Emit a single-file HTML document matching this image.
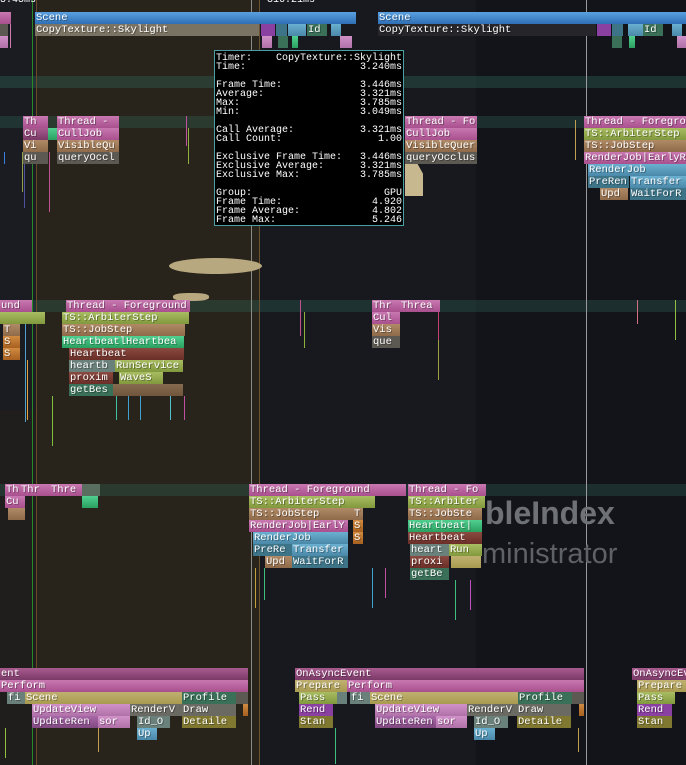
<!DOCTYPE html>
<html><head><meta charset="utf-8"><style>
html,body{margin:0;padding:0}
body{width:686px;height:765px;position:relative;overflow:hidden;background:#15171d;font-family:"Liberation Mono",monospace}
.r{position:absolute}
.t{position:absolute;width:1px}
.b{position:absolute;height:12px;font-size:10.5px;line-height:13px;color:#fff;white-space:nowrap;overflow:hidden;padding-left:1px;box-sizing:border-box;text-shadow:1px 1px 0 rgba(0,0,0,.35)}
.bl{background:linear-gradient(#5aa0e0,#2f6fb5)}
.pk{background:linear-gradient(#c878b0,#a8508e)}
.pd{background:linear-gradient(#a85a8e,#7a3a68)}
.ol{background:linear-gradient(#a8bc60,#82983e)}
.br{background:linear-gradient(#b08a66,#8e6a4a)}
.gy{background:#5c5852}
.gb{background:#7a7263}
.gn{background:linear-gradient(#50d090,#2aa060)}
.dr{background:linear-gradient(#8a4a40,#6a2e28)}
.gt{background:#6a807a}
.tg{background:#3a7058}
.or{background:linear-gradient(#d08a40,#a86020)}
.lb{background:linear-gradient(#6ab0d0,#4a88a8)}
.tl{background:#3d7488}
.tn{background:linear-gradient(#c0b070,#a89a50)}
.pp{background:linear-gradient(#d090c8,#b070a8)}
.pu{background:linear-gradient(#a868a8,#804880)}
.dg{background:#6a6a62}
.do{background:#807830}
.ppl{background:#8a40a0}
.tip{position:absolute;left:214px;top:50px;width:190px;height:176px;background:#000;border:1px solid #4aa0a0;color:#fff;font-size:10px;line-height:9px;padding:3px 1px 0 1px;box-sizing:border-box}
.tip div{display:flex;justify-content:space-between;height:9px;white-space:pre}
</style></head><body>
<div class="r" style="left:0;top:0;width:36px;height:765px;background:#1a1c22"></div>
<div class="r" style="left:36px;top:0;width:223px;height:765px;background:#29241b"></div>
<div class="r" style="left:0;top:410px;width:36px;height:355px;background:#201e1c"></div>
<div class="r" style="left:259px;top:0;width:217px;height:765px;background:#17191f"></div>
<div class="r" style="left:476px;top:0;width:210px;height:765px;background:#131419"></div>
<div class="r" style="left:0;top:76px;width:686px;height:12px;background:rgba(50,110,95,.35)"></div>
<div class="r" style="left:0;top:116px;width:686px;height:12px;background:rgba(50,110,95,.3)"></div>
<div class="r" style="left:0;top:300px;width:686px;height:12px;background:rgba(50,110,95,.3)"></div>
<div class="r" style="left:0;top:484px;width:686px;height:12px;background:rgba(50,110,95,.3)"></div>
<div class="r" style="left:32px;top:0;width:1px;height:765px;background:#2a8a2a"></div>
<div class="r" style="left:36px;top:0;width:1px;height:765px;background:#6a4a28"></div>
<div class="r" style="left:251px;top:0;width:1px;height:765px;background:#8a8a86"></div>
<div class="r" style="left:259px;top:0;width:1px;height:765px;background:#6a5232"></div>
<div class="r" style="left:586px;top:0;width:1px;height:765px;background:#9a9a9a"></div>
<div class="r" style="left:169px;top:258px;width:93px;height:16px;background:#b8a880;border-radius:50%"></div>
<div class="r" style="left:173px;top:293px;width:36px;height:8px;background:#b8a880;border-radius:40%"></div>
<div class="r" style="left:405px;top:164px;width:18px;height:32px;background:#c8b890;clip-path:polygon(0 0,70% 0,100% 30%,100% 100%,0 100%)"></div>
<div class="r" style="left:485px;top:495px;font-family:'Liberation Sans',sans-serif;font-weight:bold;font-size:32px;color:#6e7176">bleIndex</div>
<div class="r" style="left:482px;top:538px;font-family:'Liberation Sans',sans-serif;font-size:29px;color:#5e6166">ministrator</div>
<div class="r" style="left:0;top:-5px;font-size:10px;color:#fff">5.45ms</div>
<div class="r" style="left:261px;top:-5px;font-size:10px;color:#fff">-316.21ms</div>
<!-- ticks -->
<div class="t" style="left:10px;top:24px;height:24px;background:#d07ab0"></div>
<div class="t" style="left:186px;top:116px;height:30px;background:#c050a0"></div>
<div class="t" style="left:188px;top:128px;height:36px;background:#90b040"></div>
<div class="t" style="left:4px;top:152px;height:12px;background:#3a80e0"></div>
<div class="t" style="left:22px;top:152px;height:40px;background:#90a048"></div>
<div class="t" style="left:24px;top:164px;height:44px;background:#5050a0"></div>
<div class="t" style="left:49px;top:152px;height:60px;background:#c05090"></div>
<div class="t" style="left:300px;top:300px;height:36px;background:#c05090"></div>
<div class="t" style="left:304px;top:312px;height:36px;background:#90b040"></div>
<div class="t" style="left:438px;top:300px;height:48px;background:#c04070"></div>
<div class="t" style="left:438px;top:340px;height:40px;background:#a0a040"></div>
<div class="t" style="left:637px;top:300px;height:24px;background:#d07080"></div>
<div class="t" style="left:675px;top:300px;height:40px;background:#90c040"></div>
<div class="t" style="left:575px;top:120px;height:40px;background:#c0a050"></div>
<div class="t" style="left:25px;top:312px;height:110px;background:#50a0d0"></div>
<div class="t" style="left:27px;top:360px;height:60px;background:#e0a040"></div>
<div class="t" style="left:52px;top:396px;height:50px;background:#80c040"></div>
<div class="t" style="left:116px;top:396px;height:24px;background:#40c0a0"></div>
<div class="t" style="left:128px;top:396px;height:24px;background:#40a0d0"></div>
<div class="t" style="left:140px;top:396px;height:24px;background:#40a0d0"></div>
<div class="t" style="left:170px;top:396px;height:24px;background:#50c0d0"></div>
<div class="t" style="left:184px;top:396px;height:24px;background:#c050a0"></div>
<div class="t" style="left:255px;top:568px;height:40px;background:#c0a040"></div>
<div class="t" style="left:264px;top:568px;height:32px;background:#40c080"></div>
<div class="t" style="left:372px;top:568px;height:40px;background:#40a0d0"></div>
<div class="t" style="left:385px;top:568px;height:30px;background:#c050a0"></div>
<div class="t" style="left:455px;top:580px;height:40px;background:#40c080"></div>
<div class="t" style="left:470px;top:580px;height:30px;background:#c050c0"></div>
<div class="t" style="left:5px;top:728px;height:30px;background:#90c040"></div>
<div class="t" style="left:98px;top:728px;height:24px;background:#c0a050"></div>
<div class="t" style="left:335px;top:728px;height:36px;background:#40c080"></div>
<div class="t" style="left:578px;top:728px;height:24px;background:#c0a050"></div>
<!-- top rows -->
<div class="b bl" style="left:35px;top:12px;width:321px">Scene</div>
<div class="b bl" style="left:378px;top:12px;width:308px">Scene</div>
<div class="b pk" style="left:0;top:12px;width:11px"></div>
<div class="b gb" style="left:35px;top:24px;width:224px">CopyTexture::Skylight</div>
<div class="b ppl" style="left:261px;top:24px;width:14px"></div>
<div class="b tl" style="left:276px;top:24px;width:11px"></div>
<div class="b lb" style="left:288px;top:24px;width:18px"></div>
<div class="b tg" style="left:307px;top:24px;width:20px">Id</div>
<div class="b lb" style="left:331px;top:24px;width:10px"></div>
<div class="b" style="left:378px;top:24px;width:218px;background:#25252a">CopyTexture::Skylight</div>
<div class="b ppl" style="left:597px;top:24px;width:14px"></div>
<div class="b tl" style="left:612px;top:24px;width:11px"></div>
<div class="b lb" style="left:628px;top:24px;width:15px"></div>
<div class="b tg" style="left:643px;top:24px;width:20px">Id</div>
<div class="b lb" style="left:672px;top:24px;width:10px"></div>
<div class="b gy" style="left:0;top:24px;width:8px"></div>
<div class="b pp" style="left:0;top:36px;width:8px"></div>
<div class="b pp" style="left:262px;top:36px;width:10px"></div>
<div class="b tg" style="left:278px;top:36px;width:10px"></div>
<div class="b gn" style="left:292px;top:36px;width:6px"></div>
<div class="b pp" style="left:340px;top:36px;width:12px"></div>
<div class="b tg" style="left:612px;top:36px;width:10px"></div>
<div class="b gn" style="left:629px;top:36px;width:6px"></div>
<div class="b pp" style="left:677px;top:36px;width:9px"></div>
<!-- left thread group -->
<div class="b pk" style="left:23px;top:116px;width:25px">Th</div>
<div class="b pk" style="left:57px;top:116px;width:62px">Thread -</div>
<div class="b pd" style="left:23px;top:128px;width:25px">Cu</div>
<div class="b gn" style="left:48px;top:128px;width:9px"></div>
<div class="b pk" style="left:57px;top:128px;width:62px">CullJob</div>
<div class="b br" style="left:23px;top:140px;width:25px">Vi</div>
<div class="b br" style="left:57px;top:140px;width:62px">VisibleQu</div>
<div class="b gy" style="left:23px;top:152px;width:25px">qu</div>
<div class="b gy" style="left:57px;top:152px;width:62px">queryOccl</div>
<div class="b pk" style="left:405px;top:116px;width:72px">Thread - Fo</div>
<div class="b pk" style="left:405px;top:128px;width:72px">CullJob</div>
<div class="b br" style="left:405px;top:140px;width:72px">VisibleQuer</div>
<div class="b gy" style="left:405px;top:152px;width:72px">queryOcclus</div>
<div class="b pk" style="left:584px;top:116px;width:102px">Thread - Foregrou</div>
<div class="b ol" style="left:584px;top:128px;width:102px">TS::ArbiterStep</div>
<div class="b br" style="left:584px;top:140px;width:102px">TS::JobStep</div>
<div class="b pk" style="left:584px;top:152px;width:102px">RenderJob|EarlyR</div>
<div class="b lb" style="left:588px;top:164px;width:98px">RenderJob</div>
<div class="b tl" style="left:588px;top:176px;width:41px">PreRen</div>
<div class="b lb" style="left:630px;top:176px;width:56px">Transfer</div>
<div class="b br" style="left:600px;top:188px;width:28px">Upd</div>
<div class="b tl" style="left:630px;top:188px;width:56px">WaitForR</div>
<!-- middle left group -->
<div class="b pk" style="left:0;top:300px;width:32px">und</div>
<div class="b pk" style="left:66px;top:300px;width:124px">Thread - Foreground</div>
<div class="b ol" style="left:0;top:312px;width:45px"></div>
<div class="b ol" style="left:62px;top:312px;width:127px">TS::ArbiterStep</div>
<div class="b br" style="left:3px;top:324px;width:17px">T</div>
<div class="b br" style="left:62px;top:324px;width:123px">TS::JobStep</div>
<div class="b or" style="left:3px;top:336px;width:17px">S</div>
<div class="b gn" style="left:62px;top:336px;width:122px">HeartbeatlHeartbea</div>
<div class="b or" style="left:3px;top:348px;width:17px">S</div>
<div class="b dr" style="left:69px;top:348px;width:115px">Heartbeat</div>
<div class="b gt" style="left:69px;top:360px;width:46px">heartb</div>
<div class="b ol" style="left:115px;top:360px;width:68px">RunService</div>
<div class="b dr" style="left:69px;top:372px;width:44px">proxim</div>
<div class="b ol" style="left:119px;top:372px;width:44px">WaveS</div>
<div class="b tg" style="left:69px;top:384px;width:44px">getBes</div>
<div class="b br" style="left:113px;top:384px;width:70px;opacity:.7"></div>
<div class="b pk" style="left:372px;top:300px;width:28px">Thr</div>
<div class="b pk" style="left:400px;top:300px;width:40px">Threa</div>
<div class="b pk" style="left:372px;top:312px;width:28px">Cul</div>
<div class="b br" style="left:372px;top:324px;width:28px">Vis</div>
<div class="b gy" style="left:372px;top:336px;width:28px">que</div>
<!-- lower thread group -->
<div class="b pk" style="left:5px;top:484px;width:15px">Th</div>
<div class="b pk" style="left:20px;top:484px;width:30px">Thr</div>
<div class="b pk" style="left:50px;top:484px;width:32px">Thre</div>
<div class="b" style="left:82px;top:484px;width:18px;background:#5a6e60"></div>
<div class="b pk" style="left:5px;top:496px;width:20px">Cu</div>
<div class="b gn" style="left:82px;top:496px;width:16px"></div>
<div class="b br" style="left:8px;top:508px;width:17px"></div>
<div class="b pk" style="left:249px;top:484px;width:157px">Thread - Foreground</div>
<div class="b pk" style="left:408px;top:484px;width:78px">Thread - Fo</div>
<div class="b ol" style="left:249px;top:496px;width:126px">TS::ArbiterStep</div>
<div class="b ol" style="left:408px;top:496px;width:77px">TS::Arbiter</div>
<div class="b br" style="left:249px;top:508px;width:104px">TS::JobStep</div>
<div class="b br" style="left:353px;top:508px;width:10px">T</div>
<div class="b br" style="left:408px;top:508px;width:74px">TS::JobSte</div>
<div class="b pk" style="left:249px;top:520px;width:99px">RenderJob|EarlY</div>
<div class="b or" style="left:353px;top:520px;width:10px">S</div>
<div class="b gn" style="left:408px;top:520px;width:74px">Heartbeat|</div>
<div class="b lb" style="left:253px;top:532px;width:95px">RenderJob</div>
<div class="b or" style="left:353px;top:532px;width:10px">S</div>
<div class="b dr" style="left:408px;top:532px;width:74px">Heartbeat</div>
<div class="b tl" style="left:253px;top:544px;width:39px">PreRe</div>
<div class="b lb" style="left:292px;top:544px;width:56px">Transfer</div>
<div class="b gt" style="left:410px;top:544px;width:39px">heart</div>
<div class="b ol" style="left:449px;top:544px;width:33px">Run</div>
<div class="b br" style="left:265px;top:556px;width:27px">Upd</div>
<div class="b tl" style="left:292px;top:556px;width:56px">WaitForR</div>
<div class="b dr" style="left:410px;top:556px;width:39px">proxi</div>
<div class="b tn" style="left:451px;top:556px;width:30px"></div>
<div class="b tg" style="left:410px;top:568px;width:39px">getBe</div>
<!-- bottom -->
<div class="b pd" style="left:0;top:668px;width:248px">ent</div>
<div class="b pd" style="left:295px;top:668px;width:289px">OnAsyncEvent</div>
<div class="b pd" style="left:632px;top:668px;width:54px">OnAsyncEv</div>
<div class="b pk" style="left:0;top:680px;width:248px">Perform</div>
<div class="b tn" style="left:295px;top:680px;width:52px">Prepare</div>
<div class="b pk" style="left:347px;top:680px;width:237px">Perform</div>
<div class="b tn" style="left:637px;top:680px;width:49px">Prepare</div>
<div class="b gt" style="left:7px;top:692px;width:18px">fi</div>
<div class="b tn" style="left:25px;top:692px;width:157px">Scene</div>
<div class="b tg" style="left:182px;top:692px;width:54px">Profile</div>
<div class="b gy" style="left:236px;top:692px;width:12px"></div>
<div class="b ol" style="left:299px;top:692px;width:38px">Pass</div>
<div class="b gt" style="left:337px;top:692px;width:10px"></div>
<div class="b gt" style="left:350px;top:692px;width:20px">fi</div>
<div class="b tn" style="left:370px;top:692px;width:148px">Scene</div>
<div class="b tg" style="left:518px;top:692px;width:54px">Profile</div>
<div class="b gy" style="left:572px;top:692px;width:12px"></div>
<div class="b ol" style="left:637px;top:692px;width:38px">Pass</div>
<div class="b pp" style="left:32px;top:704px;width:98px">UpdateView</div>
<div class="b dg" style="left:130px;top:704px;width:52px">RenderV</div>
<div class="b dg" style="left:182px;top:704px;width:54px">Draw</div>
<div class="b or" style="left:243px;top:704px;width:5px"></div>
<div class="b ppl" style="left:299px;top:704px;width:34px">Rend</div>
<div class="b pp" style="left:375px;top:704px;width:92px">UpdateView</div>
<div class="b dg" style="left:467px;top:704px;width:50px">RenderV</div>
<div class="b dg" style="left:517px;top:704px;width:54px">Draw</div>
<div class="b or" style="left:579px;top:704px;width:5px"></div>
<div class="b ppl" style="left:637px;top:704px;width:35px">Rend</div>
<div class="b pu" style="left:32px;top:716px;width:66px">UpdateRen</div>
<div class="b pp" style="left:98px;top:716px;width:32px">sor</div>
<div class="b gt" style="left:137px;top:716px;width:33px">Id_O</div>
<div class="b do" style="left:182px;top:716px;width:54px">Detaile</div>
<div class="b do" style="left:299px;top:716px;width:34px">Stan</div>
<div class="b pu" style="left:375px;top:716px;width:61px">UpdateRen</div>
<div class="b pp" style="left:436px;top:716px;width:31px">sor</div>
<div class="b gt" style="left:474px;top:716px;width:34px">Id_O</div>
<div class="b do" style="left:517px;top:716px;width:54px">Detaile</div>
<div class="b do" style="left:637px;top:716px;width:35px">Stan</div>
<div class="b lb" style="left:137px;top:728px;width:20px">Up</div>
<div class="b lb" style="left:474px;top:728px;width:21px">Up</div>
<div class="tip">
<div><span>Timer:</span><span>CopyTexture::Skylight</span></div>
<div><span>Time:</span><span>3.240ms</span></div>
<div></div>
<div><span>Frame Time:</span><span>3.446ms</span></div>
<div><span>Average:</span><span>3.321ms</span></div>
<div><span>Max:</span><span>3.785ms</span></div>
<div><span>Min:</span><span>3.049ms</span></div>
<div></div>
<div><span>Call Average:</span><span>3.321ms</span></div>
<div><span>Call Count:</span><span>1.00</span></div>
<div></div>
<div><span>Exclusive Frame Time:</span><span>3.446ms</span></div>
<div><span>Exclusive Average:</span><span>3.321ms</span></div>
<div><span>Exclusive Max:</span><span>3.785ms</span></div>
<div></div>
<div><span>Group:</span><span>GPU</span></div>
<div><span>Frame Time:</span><span>4.920</span></div>
<div><span>Frame Average:</span><span>4.802</span></div>
<div><span>Frame Max:</span><span>5.246</span></div>
</div>
</body></html>
